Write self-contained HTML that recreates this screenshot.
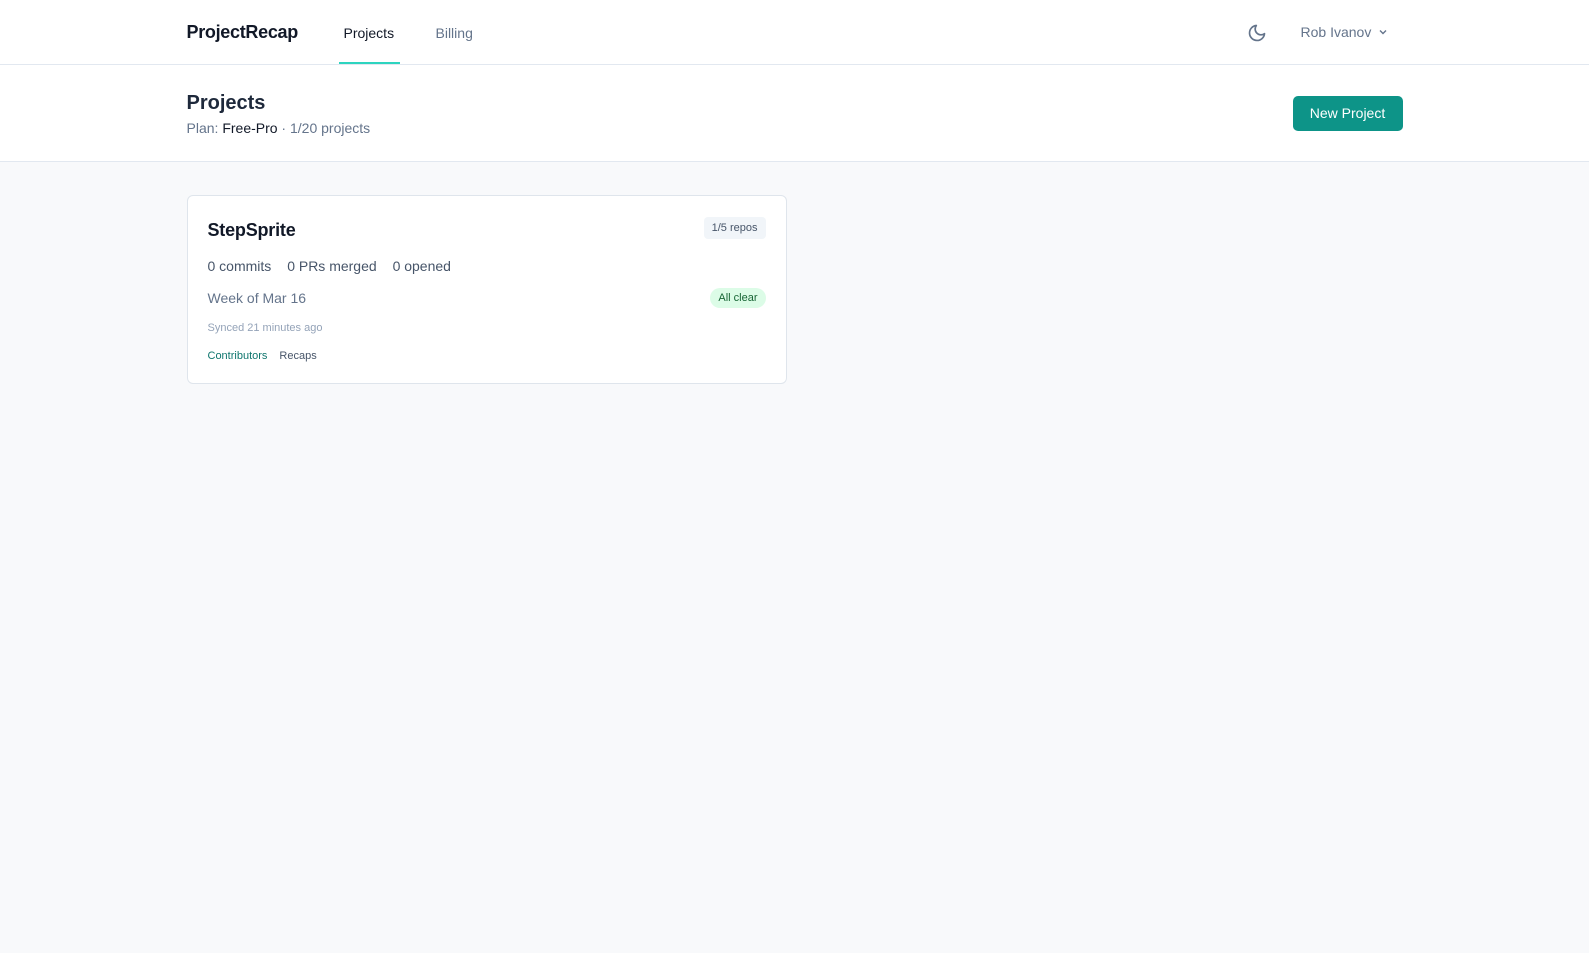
<!DOCTYPE html>
<html><head><meta charset="utf-8"><style>
*{box-sizing:border-box;margin:0;padding:0}
body{width:1589px;height:953px;background:#f8f9fb;font-family:"Liberation Sans",sans-serif;color:#111827;overflow:hidden}
.nav{height:65px;background:#fff;border-bottom:1px solid #e2e8f0}
.wrap{width:1216px;margin:0 auto;position:relative;height:100%}
.logo{position:absolute;left:0;top:22px;font-size:18px;font-weight:bold;color:#111827;letter-spacing:-0.3px}
.tab{position:absolute;top:25px;font-size:14px}
.t1{left:157px;color:#111827}
.t2{left:249px;color:#64748b}
.ul{position:absolute;left:152px;top:62px;width:61px;height:2px;background:#2dd4bf}
.moon{position:absolute;left:1060px;top:23px}
.user{position:absolute;left:1114px;top:24px;font-size:14px;color:#64748b}
.hdr{height:97px;background:#fff;border-bottom:1px solid #e2e8f0}
.h1{position:absolute;left:0;top:27px;font-size:20px;font-weight:600;color:#1e293b}
.sub{position:absolute;left:0;top:55px;font-size:14px;color:#64748b}
.sub b{font-weight:normal;color:#111827}
.btn{position:absolute;left:1106px;top:31px;width:110px;height:35px;background:#0d9488;border-radius:5px;color:#fff;font-size:14px;text-align:center;line-height:35px}
.card{position:absolute;left:0;top:33px;width:600px;height:189px;background:#fff;border:1px solid #dfe5ec;border-radius:6px}
.ct{position:absolute;left:20px;top:24px;font-size:18px;font-weight:600;color:#111827;letter-spacing:-0.2px}
.repos{position:absolute;right:20px;top:21px;background:#f1f5f9;border-radius:4px;font-size:11px;color:#475569;padding:5px 8px}
.stats{position:absolute;left:20px;top:62px;font-size:14px;color:#475569}
.stats span{margin-right:12px}
.week{position:absolute;left:20px;top:94px;font-size:14px;color:#64748b}
.clear{position:absolute;right:20px;top:92px;background:#dcfce7;color:#166534;border-radius:10px;font-size:11px;padding:4px 8px}
.sync{position:absolute;left:20px;top:126px;font-size:11px;color:#94a3b8}
.links{position:absolute;left:20px;top:154px;font-size:11px}
</style></head><body>
<div class="nav"><div class="wrap">
<div class="logo">ProjectRecap</div>
<div class="tab t1">Projects</div><div class="tab t2">Billing</div><div class="ul"></div>
<svg class="moon" width="20" height="20" viewBox="0 0 24 24" fill="none" stroke="#64748b" stroke-width="2" stroke-linecap="round" stroke-linejoin="round"><path d="M21 12.8A9 9 0 1 1 11.2 3a7 7 0 0 0 9.8 9.8z"/></svg>
<div class="user">Rob Ivanov <svg width="10" height="10" viewBox="0 0 10 10" style="margin-left:3px"><path d="M2 3.5l3 3 3-3" fill="none" stroke="#64748b" stroke-width="1.4"/></svg></div>
</div></div>
<div class="hdr"><div class="wrap">
<div class="h1">Projects</div>
<div class="sub">Plan: <b>Free-Pro</b> · 1/20 projects</div>
<div class="btn">New Project</div>
</div></div>
<div class="wrap" style="height:700px">
<div class="card">
<div class="ct">StepSprite</div>
<div class="repos">1/5 repos</div>
<div class="stats"><span>0 commits</span> <span>0 PRs merged</span> <span>0 opened</span></div>
<div class="week">Week of Mar 16</div>
<div class="clear">All clear</div>
<div class="sync">Synced 21 minutes ago</div>
<div class="links"><span style="color:#0f766e;margin-right:12px">Contributors</span><span style="color:#475569">Recaps</span></div>
</div>
</div>
</body></html>
